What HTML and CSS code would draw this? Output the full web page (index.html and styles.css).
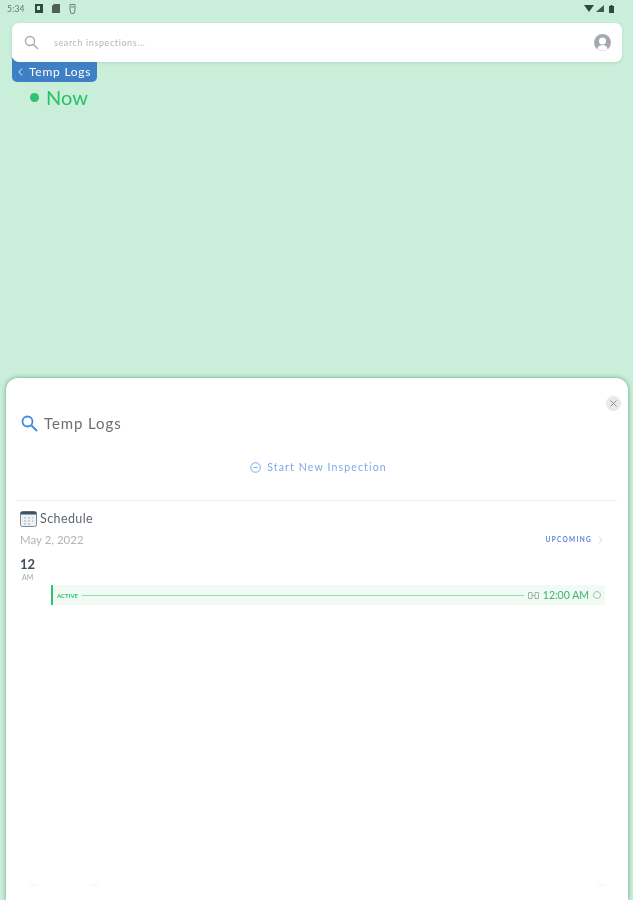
FILE: index.html
```html
<!DOCTYPE html>
<html>
<head>
	<meta charset="utf-8">
	<meta name="viewport" content="width=device-width, initial-scale=1">
	<title>Temp Logs</title>
	<link rel="stylesheet" href="styles.css">
</head>
<body>

<div class='statusbar'>
	<div class='status-left'>
		<span class='clock'>5:34</span>
		<svg width='8' height='9' viewBox='0 0 8 9'><path d='M0 0h8v9H0z' fill='#2f4a3c'/><path d='M2 2h3v4H2z' fill='#c9eed9'/></svg>
		<svg width='8' height='9' viewBox='0 0 8 9'><path d='M2 0h6v9H0V2z' fill='#4a6355'/></svg>
		<svg width='7' height='10' viewBox='0 0 7 10'><path d='M1 .5h5v5.500L5 9.500H2L1 6z' fill='none' stroke='#6b8577' stroke-width='1'/><path d='M2 3h3' stroke='#6b8577'/></svg>
	</div>
	<div class='status-right'>
		<svg width='10' height='7' viewBox='0 0 10 7'><path d='M0 0h10L5 7z' fill='#2f4a3c'/></svg>
		<svg class='signal' width='8' height='7' viewBox='0 0 8 7'><path d='M8 0v7H0z' fill='#3d5a4b'/></svg>
		<svg class='battery' width='5' height='8' viewBox='0 0 5 8'><path d='M1.500 0h2v1H5v7H0V1h1.500z' fill='#2f4a3c'/></svg>
	</div>
</div>

<header class='search'>
	<svg width='15' height='15' viewBox='0 0 15 15'><circle cx='6' cy='6' r='4.500' fill='none' stroke='#a9adb2' stroke-width='1.400'/><path d='M9.500 9.500L14 14' stroke='#a9adb2' stroke-width='1.600'/></svg>
	<span class='search-text'>search inspections...</span>
	<svg width='17' height='17' viewBox='0 0 17 17'><circle cx='8.500' cy='8.500' r='8.500' fill='#a5a8b0'/><circle cx='8.500' cy='7' r='3.500' fill='#fff'/><path d='M3.500 15c.5-3 2.500-4 5-4s4.500 1 5 4c-1.500 1.200-3 1.700-5 1.700s-3.500-.5-5-1.700z' fill='#fff'/></svg>
</header>

<div class='crumb'>
	<svg width='5' height='8' viewBox='0 0 5 8'><path d='M4 .5L1 4l3 3.500' fill='none' stroke='#dfe9f5' stroke-width='1'/></svg>
	<span>Temp Logs</span>
</div>

<div class='now'>
	<span class='dot'></span>
	<span>Now</span>
</div>

<section class='sheet'>
	<button class='close'>
		<svg width='7' height='7' viewBox='0 0 7 7'><path d='M.5.500l6 6M6.500.500l-6 6' stroke='#8d9094' stroke-width='1'/></svg>
	</button>

	<div class='sheet-title'>
		<svg width='17' height='17' viewBox='0 0 17 17'><circle cx='6.500' cy='6.500' r='5' fill='none' stroke='#3f8ae8' stroke-width='1.800'/><path d='M10.500 10.500L16 16' stroke='#3f8ae8' stroke-width='2'/></svg>
		<span>Temp Logs</span>
	</div>

	<div class='start'>
		<svg width='11' height='11' viewBox='0 0 11 11'><circle cx='5.500' cy='5.500' r='4.800' fill='none' stroke='#7aa9ee' stroke-width='1'/><path d='M3.500 5.500h4' stroke='#7aa9ee' stroke-width='1'/></svg>
		<span>Start New Inspection</span>
	</div>

	<div class='schedule'>
		<div class='schedule-head'>
			<svg width='17' height='17' viewBox='0 0 17 17'><rect x='.5' y='1.500' width='16' height='15' rx='2' fill='#eef1f3' stroke='#7d8a96'/><path d='M.5 4.500v-1a2 2 0 0 1 2-2h12a2 2 0 0 1 2 2v1z' fill='#36536e'/><path d='M4 8h2M8 8h2M12 8h1M4 11h2M8 11h2M12 11h1M4 14h2M8 14h2' stroke='#a3adb6'/></svg>
			<span>Schedule</span>
		</div>
		<div class='date-row'>
			<span class='date'>May 2, 2022</span>
			<span class='upcoming'>UPCOMING
				<svg width='5' height='8' viewBox='0 0 5 8'><path d='M1 .5L4 4 1 7.500' fill='none' stroke='#cfd6e2' stroke-width='1'/></svg>
			</span>
		</div>
		<div class='hour'>12</div>
		<div class='ampm'>AM</div>
		<div class='slot'>
			<span class='slot-label'>ACTIVE</span>
			<span class='slot-line'></span>
			<svg width='11' height='7' viewBox='0 0 11 7'><path d='M.5.500h3.500v6H.5zM7 .5h3.500v6H7z' fill='none' stroke='#9cb8aa' stroke-width='1'/><path d='M4 3.500h3' stroke='#9cb8aa'/></svg>
			<span class='slot-time'>12:00 AM</span>
			<span class='slot-ring'></span>
		</div>
	</div>

	<div class='tabs'>
		<span class='tab-mark'></span>
		<span class='tab-mark'></span>
		<span class='tab-mark tab-last'></span>
	</div>
</section>

</body>
</html>
```

FILE: styles.css
```css
html, body {
	height: 100%;
}

body {
	margin: 0;
	background: #c9eed9;
	font-family: 'Lato', sans-serif;
	overflow: hidden;
	display: flex;
	flex-direction: column;
	filter: blur(0.4px);
}

svg {
	display: block;
	flex: none;
}

.statusbar {
	height: 17px;
	padding: 0 19px 0 7px;
	display: flex;
	justify-content: space-between;
	align-items: center;
}

.status-left, .status-right {
	display: flex;
	align-items: center;
}

.status-left {
	gap: 9px;
}

.status-right {
	gap: 2px;
}

.status-right .battery {
	margin-left: 3px;
}

.clock {
	width: 19px;
	font-size: 8.500px;
	letter-spacing: 0.2px;
	color: #5f7a6c;
}

.search {
	position: relative;
	z-index: 1;
	margin: 6px 11px 0 12px;
	height: 39px;
	background: #fff;
	border-radius: 7px;
	display: flex;
	align-items: center;
	padding: 0 11px 0 12px;
	box-shadow: 0 1px 3px rgba(90, 140, 110, 0.2);
}

.search-text {
	margin-left: 15px;
	font-size: 9px;
	letter-spacing: 0.6px;
	color: #b3b6ba;
	flex: 1;
}

.crumb {
	align-self: flex-start;
	margin: -4px 0 0 12px;
	width: 85px;
	height: 24px;
	box-sizing: border-box;
	padding: 3px 0 0 6px;
	background: #3f7fc4;
	border-radius: 0 0 5px 5px;
	display: flex;
	align-items: center;
	gap: 6px;
	color: #fff;
	font-size: 12px;
	letter-spacing: 0.750px;
}

.now {
	margin: 3px 0 0 30px;
	display: flex;
	align-items: center;
	gap: 7px;
	font-size: 20px;
	color: #2cc069;
	line-height: 24px;
}

.dot {
	width: 9px;
	height: 9px;
	border-radius: 50%;
	background: #2cc46c;
}

.sheet {
	position: relative;
	margin: 269px 5px 0 6px;
	flex: 1;
	background: #fff;
	border-radius: 12px 12px 0 0;
	padding: 0 11px 0 10px;
	box-shadow: 0 0 4px rgba(60, 140, 95, 0.75);
}

.close {
	position: absolute;
	top: 18px;
	right: 7px;
	width: 15px;
	height: 15px;
	padding: 0;
	border: 0;
	border-radius: 50%;
	background: #e9e9ea;
	display: flex;
	align-items: center;
	justify-content: center;
}

.sheet-title {
	margin: 36px 0 0 5px;
	display: flex;
	align-items: center;
	gap: 6px;
	font-size: 15px;
	letter-spacing: 0.9px;
	color: #6b6d70;
	line-height: 18px;
}

.start {
	margin-top: 28px;
	padding-left: 4px;
	display: flex;
	justify-content: center;
	align-items: center;
	gap: 6px;
	font-size: 10.500px;
	letter-spacing: 1.150px;
	color: #7aa9ee;
	line-height: 14px;
}

.schedule {
	margin-top: 26px;
	border-top: 1px solid #efefef;
	padding: 9px 0 0 4px;
}

.schedule-head {
	display: flex;
	align-items: center;
	gap: 3px;
	font-size: 12.500px;
	letter-spacing: 0.4px;
	color: #5d6670;
	line-height: 17px;
}

.date-row {
	margin-top: 5px;
	display: flex;
	justify-content: space-between;
	align-items: center;
	line-height: 15px;
	padding-right: 14px;
}

.date {
	font-size: 11.500px;
	color: #b2b4b7;
}

.upcoming {
	display: flex;
	align-items: center;
	gap: 6px;
	font-size: 6.500px;
	font-weight: 700;
	letter-spacing: 1.300px;
	color: #5b86d8;
}

.hour {
	margin-top: 10px;
	font-size: 13px;
	font-weight: 700;
	color: #3f4c5c;
	line-height: 14px;
}

.ampm {
	margin: 2px 0 0 2px;
	font-size: 7px;
	color: #a5a8ab;
	line-height: 9px;
}

.slot {
	margin: 3px 0 0 31px;
	width: 554px;
	height: 20px;
	box-sizing: border-box;
	background: #f1faf4;
	border-left: 2px solid #2cc46c;
	display: flex;
	align-items: center;
	padding: 0 4px;
}

.slot-label {
	font-size: 6px;
	font-weight: 700;
	color: #2cc46c;
}

.slot-line {
	flex: 1;
	height: 1px;
	margin: 0 4px;
	background: #8fe0b0;
}

.slot-time {
	margin-left: 4px;
	font-size: 10.500px;
	color: #38b56e;
}

.slot-ring {
	margin-left: 4px;
	width: 6px;
	height: 6px;
	border: 1px solid #9cc9ae;
	border-radius: 50%;
}

.tabs {
	position: absolute;
	left: 24px;
	right: 22px;
	bottom: 14px;
	display: flex;
	gap: 52px;
}

.tab-mark {
	width: 8px;
	height: 2px;
	background: #f8f8f8;
}

.tab-last {
	margin-left: auto;
}
```
